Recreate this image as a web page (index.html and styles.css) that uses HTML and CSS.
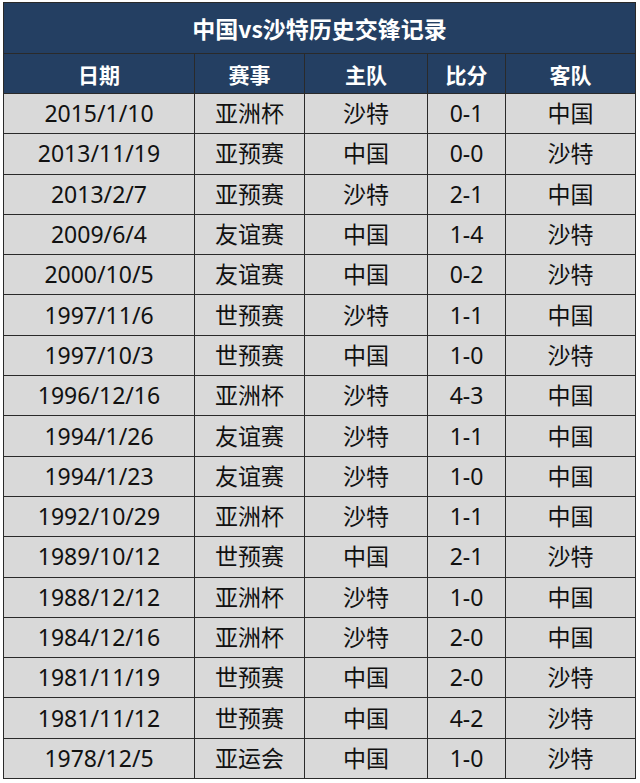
FILE: index.html
```html
<!DOCTYPE html>
<html lang="zh-CN">
<head>
<meta charset="utf-8">
<title>中国vs沙特历史交锋记录</title>
<link rel="stylesheet" href="styles.css">
</head>
<body>
<div class="sheet">
<table class="record">
<colgroup>
<col class="c-date"><col class="c-type"><col class="c-home"><col class="c-score"><col class="c-away">
</colgroup>
<thead>
<tr class="title-row"><th colspan="5">中国vs沙特历史交锋记录</th></tr>
<tr class="head-row"><th>日期</th><th>赛事</th><th>主队</th><th>比分</th><th>客队</th></tr>
</thead>
<tbody>
<tr><td>2015/1/10</td><td>亚洲杯</td><td>沙特</td><td>0-1</td><td>中国</td></tr>
<tr><td>2013/11/19</td><td>亚预赛</td><td>中国</td><td>0-0</td><td>沙特</td></tr>
<tr><td>2013/2/7</td><td>亚预赛</td><td>沙特</td><td>2-1</td><td>中国</td></tr>
<tr><td>2009/6/4</td><td>友谊赛</td><td>中国</td><td>1-4</td><td>沙特</td></tr>
<tr><td>2000/10/5</td><td>友谊赛</td><td>中国</td><td>0-2</td><td>沙特</td></tr>
<tr><td>1997/11/6</td><td>世预赛</td><td>沙特</td><td>1-1</td><td>中国</td></tr>
<tr><td>1997/10/3</td><td>世预赛</td><td>中国</td><td>1-0</td><td>沙特</td></tr>
<tr><td>1996/12/16</td><td>亚洲杯</td><td>沙特</td><td>4-3</td><td>中国</td></tr>
<tr><td>1994/1/26</td><td>友谊赛</td><td>沙特</td><td>1-1</td><td>中国</td></tr>
<tr><td>1994/1/23</td><td>友谊赛</td><td>沙特</td><td>1-0</td><td>中国</td></tr>
<tr><td>1992/10/29</td><td>亚洲杯</td><td>沙特</td><td>1-1</td><td>中国</td></tr>
<tr><td>1989/10/12</td><td>世预赛</td><td>中国</td><td>2-1</td><td>沙特</td></tr>
<tr><td>1988/12/12</td><td>亚洲杯</td><td>沙特</td><td>1-0</td><td>中国</td></tr>
<tr><td>1984/12/16</td><td>亚洲杯</td><td>沙特</td><td>2-0</td><td>中国</td></tr>
<tr><td>1981/11/19</td><td>世预赛</td><td>中国</td><td>2-0</td><td>沙特</td></tr>
<tr><td>1981/11/12</td><td>世预赛</td><td>中国</td><td>4-2</td><td>沙特</td></tr>
<tr><td>1978/12/5</td><td>亚运会</td><td>中国</td><td>1-0</td><td>沙特</td></tr>
</tbody>
</table>
</div>
</body>
</html>
```
FILE: styles.css
```css
html, body {
  margin: 0;
  padding: 0;
  background: #ffffff;
}
.sheet {
  padding: 2px 0 4px 3px;
  border-top: 1px solid #d4d4d4;
  margin-top: -1px;
}
.record {
  width: 632px;
  border-collapse: collapse;
  table-layout: fixed;
  font-family: "Noto Sans", "Noto Sans CJK SC", sans-serif;
  color: #111111;
}
.c-date { width: 191px; }
.c-type { width: 110px; }
.c-home { width: 123px; }
.c-score { width: 78px; }
.c-away { width: 130px; }
.record th, .record td {
  border: 1px solid #2a2a2a;
  text-align: center;
  vertical-align: middle;
  padding: 0;
  white-space: nowrap;
}
.title-row th {
  height: 50px;
  background: #243f62;
  color: #ffffff;
  font-size: 23px;
  font-weight: 700;
  font-family: "Noto Sans CJK SC", "Noto Sans", sans-serif;
}
.head-row th {
  height: 39px;
  background: #243f62;
  color: #ffffff;
  font-size: 21px;
  font-weight: 700;
  font-family: "Noto Sans CJK SC", "Noto Sans", sans-serif;
}
.record td {
  height: 39.3px;
  background: #d9d9d9;
  font-size: 23px;
  line-height: 1;
}
```
